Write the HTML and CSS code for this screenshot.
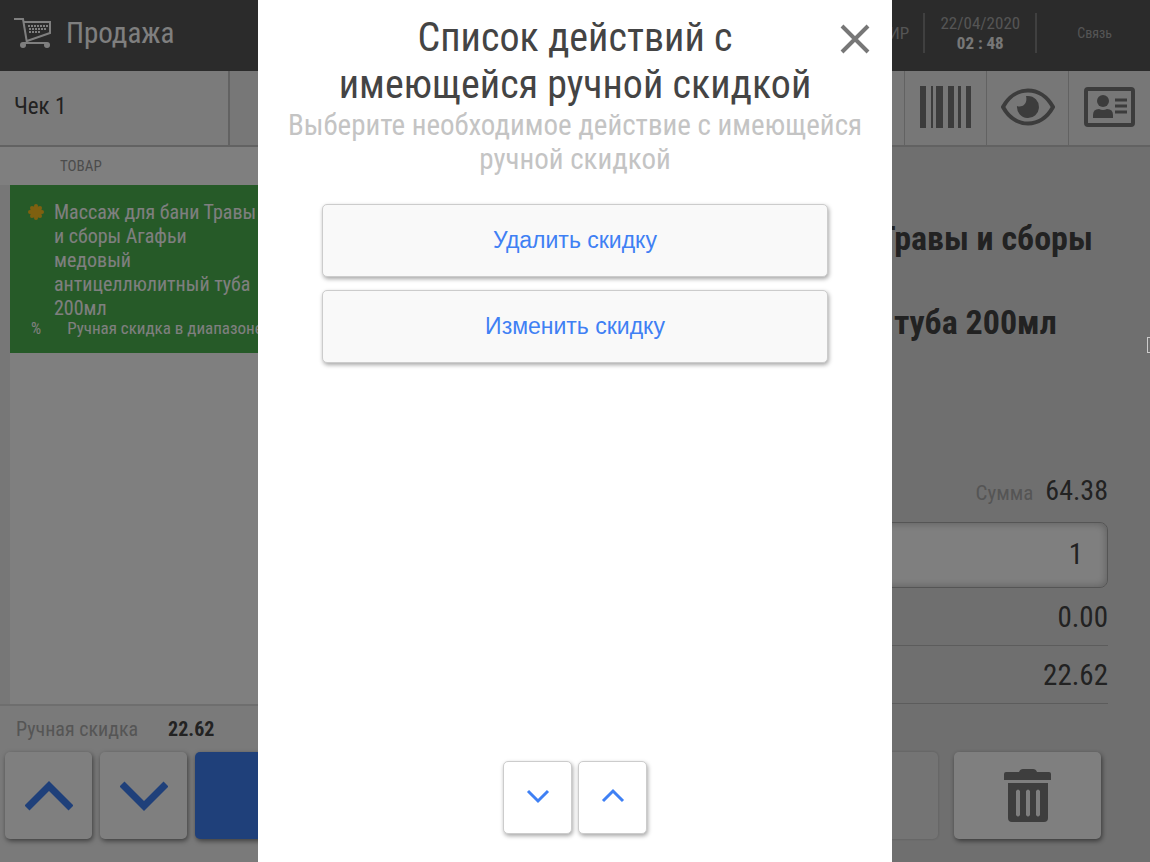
FILE: index.html
```
<!DOCTYPE html>
<html lang="ru">
<head>
  <meta charset="UTF-8" />
  <meta name="viewport" content="width=device-width, initial-scale=1.0"/>
  <title>Продажа</title>
  <link rel="stylesheet" href="styles.css">
</head>
<body>
  <div class="app">
    <header class="topbar">
      <svg class="cart" viewBox="0 0 38 32" fill="none" stroke="currentColor" stroke-width="2">
        <path d="M0 2h9l4 24M10 5h26v11L13 24"/>
        <path d="M14 9h20M15 12h18M15 15h12" stroke-dasharray="2 1"/>
        <circle cx="9" cy="28" r="2" fill="currentColor"/>
        <circle cx="33" cy="28" r="2" fill="currentColor"/>
        <path d="M9 26h24"/>
      </svg>
      <h1>Продажа</h1>
      <div class="status">
        <span class="user">КАССИР</span>
        <div class="clock">
          <span>22/04/2020</span>
          <b>02 : 48</b>
        </div>
        <span class="link">Связь</span>
      </div>
    </header>

    <nav class="toolbar">
      <button class="tab">Чек 1</button>
      <div class="spacer"></div>
      <button class="tool" aria-label="Штрихкод">
        <svg width="52" height="42" viewBox="0 0 52 42" fill="currentColor">
          <path d="M0 0h6v42H0zM11 0h2v42h-2zM16 0h7v42h-7zM28 0h6v42h-6zM38 0h3v42h-3zM46 0h5v42h-5z"/>
        </svg>
      </button>
      <button class="tool" aria-label="Просмотр">
        <svg width="54" height="38" viewBox="0 0 54 38">
          <path d="M2 19C14-3 40-3 52 19 40 41 14 41 2 19z" fill="none" stroke="currentColor" stroke-width="4"/>
          <path d="M27 8a11 11 0 1 1-11 10c5 2 11-2 9-10z" fill="currentColor"/>
        </svg>
      </button>
      <button class="tool" aria-label="Карта клиента">
        <svg width="52" height="40" viewBox="0 0 52 40">
          <rect x="2" y="2" width="47" height="36" rx="2" fill="none" stroke="currentColor" stroke-width="4"/>
          <circle cx="19" cy="14" r="6" fill="currentColor"/>
          <path d="M9 31v-3q0-6 6-6 4 2 8 0 6 0 6 6v3z" fill="currentColor"/>
          <path d="M31 13h12M31 19h12M31 25h12" stroke="currentColor" stroke-width="3"/>
        </svg>
      </button>
    </nav>

    <main class="content">
      <section class="receipt">
        <table class="goods">
          <thead>
            <tr><th>ТОВАР</th></tr>
          </thead>
          <tbody>
            <tr>
              <td>
                <div class="item">
                  <svg class="flower" viewBox="0 0 16 16" fill="currentColor">
                    <circle cx="8" cy="8" r="6"/>
                    <circle cx="8" cy="2" r="2"/><circle cx="8" cy="14" r="2"/>
                    <circle cx="2" cy="8" r="2"/><circle cx="14" cy="8" r="2"/>
                    <circle cx="4" cy="4" r="2"/><circle cx="12" cy="4" r="2"/>
                    <circle cx="4" cy="12" r="2"/><circle cx="12" cy="12" r="2"/>
                  </svg>
                  <span class="name">Массаж для бани Травы и сборы Агафьи медовый антицеллюлитный туба 200мл</span>
                </div>
                <div class="discount">
                  <span class="percent">%</span>
                  <span>Ручная скидка в диапазоне</span>
                </div>
              </td>
            </tr>
          </tbody>
        </table>
        <div class="total">
          <span>Ручная скидка</span>
          <b>22.62</b>
        </div>
        <div class="actions">
          <button class="square" aria-label="Вверх">
            <svg width="48" height="30" viewBox="0 0 48 30"><path d="M2 27 24 5l22 22"/></svg>
          </button>
          <button class="square" aria-label="Вниз">
            <svg width="48" height="30" viewBox="0 0 48 30"><path d="M2 3l22 22L46 3"/></svg>
          </button>
          <button class="pay" aria-label="Оплата"></button>
        </div>
      </section>

      <section class="details">
        <h2>Массаж для бани Травы и сборы<br>Агафьи медовый<br>антицеллюлитный туба 200мл</h2>
        <div class="fields">
          <div class="sum"><span>Сумма</span><b>64.38</b></div>
          <input class="qty" type="text" value="1" aria-label="Количество">
          <div class="row">0.00</div>
          <div class="row">22.62</div>
        </div>
        <div class="actions">
          <button class="wide" aria-label="Действие" disabled></button>
          <button class="trash" aria-label="Удалить">
            <svg width="48" height="54" viewBox="0 0 48 54" fill="currentColor">
              <path d="M2 3h13q1-3 4-3h10q3 0 4 3h12q2 0 2 2v6H0V5q0-2 2-2z"/>
              <path fill-rule="evenodd" d="M4 14h40v35q0 4-4 4H8q-4 0-4-4zM12 22v24q2 3 4 0V22q-2-3-4 0zM22 22v24q2 3 4 0V22q-2-3-4 0zM32 22v24q2 3 4 0V22q-2-3-4 0z"/>
            </svg>
          </button>
        </div>
      </section>
    </main>
  </div>

  <div class="overlay">
    <div class="modal" role="dialog" aria-labelledby="modal-title">
      <button class="close" aria-label="Закрыть">
        <svg width="30" height="30" viewBox="0 0 30 30"><path d="M2 2l26 26M28 2L2 28"/></svg>
      </button>
      <h2 id="modal-title">Список действий с имеющейся ручной скидкой</h2>
      <p>Выберите необходимое действие с имеющейся ручной скидкой</p>
      <div class="choices">
        <button>Удалить скидку</button>
        <button>Изменить скидку</button>
      </div>
      <div class="pager">
        <button aria-label="Следующая">
          <svg width="24" height="16" viewBox="0 0 24 16"><path d="M2 3l10 10L22 3"/></svg>
        </button>
        <button aria-label="Предыдущая">
          <svg width="24" height="16" viewBox="0 0 24 16"><path d="M2 13L12 3l10 10"/></svg>
        </button>
      </div>
    </div>
    <div class="handle"></div>
  </div>
</body>
</html>
```
FILE: styles.css
```
:root {
  --blue: #3f80f4;
  --text: #444;
  --muted: #aaa;
  --line: #c4c4c4;
  --panel: #f4f4f4;
}

* {
  box-sizing: border-box;
}

body {
  margin: 0;
  font-family: "Roboto Condensed", "Liberation Sans Narrow", Roboto, sans-serif;
  color: var(--text);
}

button {
  font-family: inherit;
  color: inherit;
  border: 0;
  padding: 0;
  cursor: pointer;
}

.app {
  height: 100vh;
  display: flex;
  flex-direction: column;
  overflow: hidden;
}

.topbar {
  height: 71px;
  flex: none;
  display: flex;
  align-items: center;
  padding: 0 38px 6px 14px;
  background: #565656;
  color: #fff;
}

.cart {
  width: 38px;
  height: 32px;
}

.topbar h1 {
  margin: 0 0 0 14px;
  font-size: 29px;
  font-weight: normal;
}

.status {
  display: flex;
  align-items: center;
  margin-left: auto;
  font-size: 17px;
  color: var(--muted);
}

.clock {
  display: flex;
  flex-direction: column;
  align-items: center;
  width: 114px;
  margin: 0 40px 0 14px;
  border: solid #808080;
  border-width: 0 2px;
  line-height: 20px;
}

.clock b {
  color: #eee;
}

.link {
  font-size: 14px;
}

.toolbar {
  height: 76px;
  flex: none;
  display: flex;
  background: #eee;
  border-bottom: 2px solid var(--line);
}

.tab {
  width: 230px;
  padding: 0 14px 4px;
  text-align: left;
  font-size: 23px;
  background: #f6f6f6;
  border-right: 2px solid var(--line);
}

.spacer {
  flex: 1;
}

.tool {
  width: 82px;
  display: flex;
  align-items: center;
  justify-content: center;
  padding-bottom: 3px;
  color: #787878;
  background: #eee;
  border-left: 1px solid var(--line);
}

.content {
  flex: 1;
  display: flex;
  min-height: 0;
}

.receipt {
  flex: 1;
  display: flex;
  flex-direction: column;
  background: linear-gradient(to right, #eee 10px, #fff 10px);
}

.goods {
  width: 100%;
  border-collapse: collapse;
}

.goods th {
  height: 38px;
  padding: 0 60px;
  text-align: left;
  font-size: 15px;
  font-weight: normal;
  color: #999;
  background: #fff;
}

.goods td {
  display: block;
  margin-left: 10px;
  padding: 15px 18px 16px;
  color: #fff;
  background: #4cb450;
}

.item {
  display: flex;
  gap: 10px;
}

.flower {
  width: 16px;
  height: 16px;
  margin-top: 4px;
  color: #ffc020;
}

.name {
  width: 208px;
  font-size: 20px;
  line-height: 24px;
}

.discount {
  display: flex;
  gap: 26px;
  padding-left: 3px;
  font-size: 17px;
  line-height: 17px;
}

.percent {
  font-size: 16px;
}

.total {
  display: flex;
  align-items: center;
  gap: 30px;
  height: 48px;
  margin-top: auto;
  padding: 0 16px;
  font-size: 20px;
  color: var(--muted);
  background: var(--panel);
  border-top: 2px solid #ddd;
}

.total b {
  color: var(--text);
}

.actions {
  display: flex;
  gap: 8px;
  height: 110px;
  padding: 0 5px 23px;
  background: var(--panel);
}

.actions button {
  display: flex;
  align-items: center;
  justify-content: center;
  background: #fff;
  border-radius: 5px;
  box-shadow: 1px 2px 5px rgba(0, 0, 0, 0.5);
}

.actions .square {
  width: 87px;
}

.square path {
  fill: none;
  stroke: var(--blue);
  stroke-width: 7;
}

.actions .pay {
  flex: 1;
  background: var(--blue);
}

.details {
  width: 50%;
  display: flex;
  flex-direction: column;
  background: #dfdfdf;
}

.details h2 {
  margin: 70px 0 0;
  padding-left: 45px;
  font-size: 34px;
  line-height: 42px;
  white-space: nowrap;
}

.fields {
  margin: auto 42px 48px 32px;
  font-size: 29px;
  text-align: right;
}

.sum {
  display: flex;
  justify-content: flex-end;
  align-items: baseline;
  gap: 12px;
  height: 48px;
}

.sum span {
  font-size: 21px;
  color: var(--muted);
}

.sum b {
  font-size: 28px;
  font-weight: normal;
}

.qty {
  display: block;
  width: 100%;
  height: 66px;
  padding: 0 24px 2px;
  font: inherit;
  color: inherit;
  text-align: right;
  border: 1px solid #aaa;
  border-radius: 8px;
  box-shadow: inset 0 0 8px rgba(0, 0, 0, 0.3);
}

.row {
  height: 58px;
  line-height: 58px;
  border-bottom: 1px solid #b8b8b8;
}

.details .actions {
  gap: 16px;
  padding-right: 49px;
  background: none;
}

.actions .wide {
  flex: 1;
  background: #e8e8e8;
  box-shadow: 0 0 3px rgba(0, 0, 0, 0.2);
}

.actions .trash {
  width: 147px;
  color: #7c7c7c;
}

.overlay {
  position: fixed;
  inset: 0;
  display: flex;
  justify-content: center;
  background: rgba(0, 0, 0, 0.5);
}

/* pull-out handle on the right edge */
.handle {
  position: absolute;
  top: 337px;
  right: 0;
  width: 3px;
  height: 16px;
  border: 1px solid #ccc;
  border-right: 0;
}

.modal {
  position: relative;
  width: 634px;
  max-width: 100%;
  display: flex;
  flex-direction: column;
  padding: 14px 24px 28px;
  text-align: center;
  background: #fff;
}

.modal h2 {
  margin: 0 50px;
  font-size: 40px;
  font-weight: normal;
  line-height: 47px;
}

.modal p {
  margin: 0;
  font-size: 29px;
  line-height: 34px;
  color: #c4c4c4;
}

.close {
  position: absolute;
  top: 24px;
  right: 22px;
  height: 30px;
  background: none;
}

.close path {
  stroke: #777;
  stroke-width: 4;
}

.choices {
  display: flex;
  flex-direction: column;
  gap: 13px;
  margin: 28px 40px 0;
}

.choices button {
  height: 73px;
  font-family: "Liberation Sans", Arial, sans-serif;
  font-size: 23px;
  color: var(--blue);
  background: #f9f9f9;
}

.choices button,
.pager button {
  border: 1px solid #ccc;
  border-radius: 5px;
  box-shadow: 1px 2px 4px rgba(0, 0, 0, 0.35);
}

.pager {
  display: flex;
  justify-content: center;
  gap: 6px;
  margin-top: auto;
}

.pager button {
  width: 69px;
  height: 73px;
  background: #fff;
}

.pager path {
  fill: none;
  stroke: var(--blue);
  stroke-width: 3;
}
```
